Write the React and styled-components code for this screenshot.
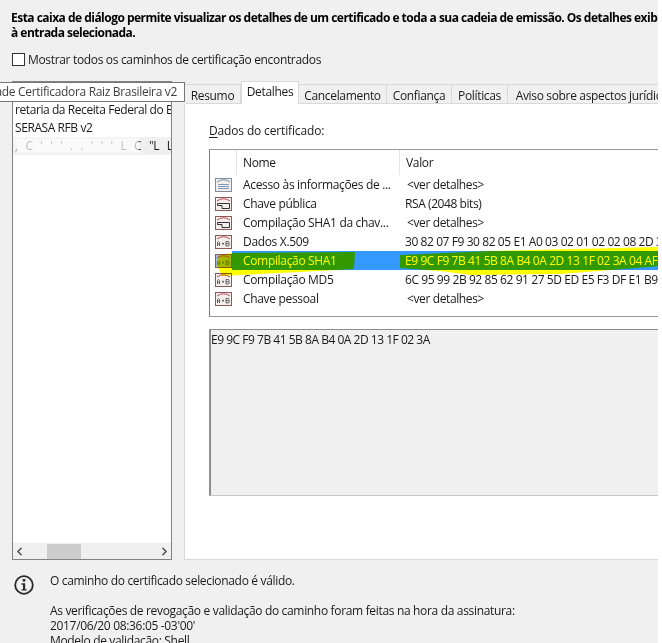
import React from "react";
import styled, { createGlobalStyle } from "styled-components";
import { ChevronLeft, ChevronRight } from "lucide-react";

const GlobalStyle = createGlobalStyle`
  html, body { margin: 0; padding: 0; background: #fff; }
  * { box-sizing: border-box; }
`;

const Page = styled.div`
  width: 662px;
  height: 643px;
  background: #fff;
  overflow: hidden;
`;

const Dialog = styled.div`
  position: relative;
  width: 658px;
  height: 643px;
  background: #f0f0f0;
  overflow: hidden;
  font-family: "Open Sans", "Noto Sans", sans-serif;
  font-size: 12px;
  line-height: 15px;
  letter-spacing: -0.33px;
  color: #1a1a1a;
`;

const Intro = styled.div`
  height: 44px;
  padding: 10px 0 0 11px;
  font-weight: 700;
  letter-spacing: -0.52px;
  color: #000;
  white-space: nowrap;
`;

const CheckRow = styled.label`
  display: flex;
  align-items: center;
  gap: 3px;
  height: 16px;
  margin: 7px 0 0 12px;
`;

const CheckBox = styled.span`
  width: 13px;
  height: 13px;
  background: #fff;
  border: 1px solid #333;
`;

const Main = styled.div`
  display: flex;
  gap: 12px;
  height: 479px;
  margin-top: 14px;
  padding-left: 12px;
`;

const TreePanel = styled.div`
  display: flex;
  flex-direction: column;
  width: 160px;
  background: #fff;
  border: 1px solid #828282;
`;

const TreeList = styled.div`
  flex: 1;
  padding-top: 1px;
  overflow: hidden;
  letter-spacing: -0.42px;
`;

const TreeRow = styled.div`
  position: relative;
  height: 18px;
  padding-left: 2px;
  line-height: 18px;
  white-space: nowrap;
  overflow: hidden;
  word-spacing: ${(p) => (p.$muted ? "5px" : "0")};
  background: ${(p) => (p.$muted ? "#f0f0f0" : "transparent")};
`;

const Blot = styled.span`
  position: absolute;
  left: 2px;
  top: 1px;
  width: 124px;
  height: 15px;
  background: #fff;
  opacity: 0.7;
  filter: blur(1px);
`;

const TreeScroll = styled.div`
  display: flex;
  align-items: center;
  justify-content: space-between;
  height: 16px;
  background: #f0f0f0;
  color: #555;
`;

const ScrollThumb = styled.span`
  width: 34px;
  height: 15px;
  margin-left: 21px;
  margin-right: auto;
  background: #cdcdcd;
`;

const PathTip = styled.div`
  position: absolute;
  left: -1px;
  top: 82px;
  display: flex;
  justify-content: flex-end;
  width: 186px;
  height: 20px;
  padding: 0 7px 0 0;
  line-height: 18px;
  white-space: nowrap;
  overflow: hidden;
  color: #3f3f3f;
  background: #fff;
  border: 1px solid #767676;
`;

const TabArea = styled.div`
  display: flex;
  flex-direction: column;
  flex: 1;
  min-width: 0;
`;

const TabStrip = styled.div`
  display: flex;
  align-items: flex-end;
  height: 23px;
  padding-left: 1px;
`;

const Tab = styled.div`
  flex: none;
  width: ${(p) => p.$w}px;
  height: ${(p) => (p.$active ? 23 : 20)}px;
  padding-top: ${(p) => (p.$active ? 2 : 3)}px;
  text-align: center;
  white-space: nowrap;
  overflow: hidden;
  background: ${(p) => (p.$active ? "#fff" : "#f0f0f0")};
  border: 1px solid #d9d9d9;
  border-left-width: ${(p) => (p.$active ? 1 : 0)}px;
  border-bottom-width: ${(p) => (p.$active ? 0 : 1)}px;
`;

const TabPanel = styled.div`
  flex: 1;
  padding: 19px 0 0 24px;
  background: #fff;
  border-left: 1px solid #d9d9d9;
  border-bottom: 1px solid #d9d9d9;
`;

const FieldLabel = styled.div`
  height: 15px;
  letter-spacing: -0.15px;

  u { text-decoration-thickness: 1px; text-underline-offset: 2px; }
`;

const FieldBox = styled.div`
  position: relative;
  height: 168px;
  margin-top: 11px;
  border: 1px solid #9a9a9a;
  border-right: 0;
  border-left-color: #7d7d7d;
`;

const FieldRow = styled.div`
  display: grid;
  grid-template-columns: 26px 163px 1fr;
  align-items: center;
  height: 19px;
  white-space: nowrap;
  background: ${(p) =>
    p.$selected ? "linear-gradient(90deg, transparent 22px, #3399ff 22px)" : "transparent"};
  color: ${(p) => (p.$selected ? "#fff" : "inherit")};
`;

const HeadRow = styled(FieldRow)`
  height: 25px;
`;

const HeadCell = styled.div`
  height: 25px;
  padding: 5px 0 0 6px;
  border-left: ${(p) => (p.$first ? "0" : "1px solid #e5e5e5")};
`;

const IconCell = styled.div`
  display: flex;
  padding-left: 5px;
`;

const NameCell = styled.div`
  padding-left: 7px;
  overflow: hidden;
`;

const ValueCell = styled.div`
  padding-left: ${(p) => (p.$plain ? 6 : 8)}px;
  letter-spacing: ${(p) => (p.$plain ? "-0.42px" : "-0.38px")};
`;

const Marker = styled.svg`
  position: absolute;
  left: 0;
  top: 0;
  mix-blend-mode: multiply;
  pointer-events: none;
`;

const DetailBox = styled.div`
  height: 167px;
  margin-top: 12px;
  padding: 2px 0 0;
  letter-spacing: -0.48px;
  background: #f0f0f0;
  border-top: 1px solid #8e8e8e;
  border-left: 2px solid #8e8e8e;
  border-bottom: 1px solid #c8c8c8;
`;

const Footer = styled.div`
  display: flex;
  gap: 16px;
  padding: 13px 0 0 14px;
`;

const StatusText = styled.div`
  white-space: nowrap;

  p { margin: 0 0 15px; }
`;

const CertIcon = ({ kind, tinted }) => (
  <svg width="17" height="14" viewBox="0 0 17 14">
    <rect
      x="0.5"
      y="0.5"
      width="16"
      height="13"
      fill={tinted ? "#a3b9d8" : "#f4eeee"}
      stroke={kind === "info" ? "#7c8ba0" : "#8a5a5a"}
    />
    <path d="M2 4 Q8.5 -0.5 15 4" fill="none" stroke={kind === "info" ? "#6f86a8" : "#c04a4a"} />
    {kind === "info" && <path d="M3 6.5H14M3 8.5H14M3 10.5H14" stroke="#7f9abb" />}
    {kind === "key" && <path d="M2.5 6.5H14.5V11.5H7V8.5H2.5Z" fill="none" stroke="#333" />}
    {kind === "hash" && (
      <path
        d="M2.5 11V7.5L3.5 6.5 4.5 7.5V11M2.5 9H4.5M7 8.7H9M8 7.7V9.7M11 6.5V11H13.5L14.2 10V8.9L13.5 8.7H11M13.5 8.7L14 8V7L13.5 6.5H11"
        fill="none"
        stroke={tinted ? "#5f6f60" : "#444"}
        strokeWidth="0.8"
      />
    )}
  </svg>
);

const InfoIcon = () => (
  <svg width="20" height="24" viewBox="0 0 20 24">
    <circle cx="10" cy="12" r="8.8" fill="none" stroke="#2b2b2b" strokeWidth="1.8" />
    <rect x="8.7" y="6" width="2.6" height="2.6" fill="#2b2b2b" />
    <path d="M7.5 10.3H11.2V16.2H12.7V17.6H7.5V16.2H9V11.7H7.5Z" fill="#2b2b2b" />
  </svg>
);

const fields = [
  { icon: "info", name: "Acesso às informações de ...", value: "<ver detalhes>" },
  { icon: "key", name: "Chave pública", value: "RSA (2048 bits)", plain: true },
  { icon: "key", name: "Compilação SHA1 da chav...", value: "<ver detalhes>" },
  { icon: "hash", name: "Dados X.509", value: "30 82 07 F9 30 82 05 E1 A0 03 02 01 02 02 08 2D 3I", plain: true },
  { icon: "hash", name: "Compilação SHA1", value: "E9 9C F9 7B 41 5B 8A B4 0A 2D 13 1F 02 3A 04 AF", plain: true, selected: true },
  { icon: "hash", name: "Compilação MD5", value: "6C 95 99 2B 92 85 62 91 27 5D ED E5 F3 DF E1 B9", plain: true },
  { icon: "hash", name: "Chave pessoal", value: "<ver detalhes>" },
];

const tabs = [
  { label: "Resumo", w: 56 },
  { label: "Detalhes", w: 58, active: true },
  { label: "Cancelamento", w: 88 },
  { label: "Confiança", w: 65 },
  { label: "Políticas", w: 56 },
  { label: "Aviso sobre aspectos jurídicos", w: 174 },
];

export default function App() {
  return (
    <Page>
      <GlobalStyle />
      <Dialog>
        <Intro>
          Esta caixa de diálogo permite visualizar os detalhes de um certificado e toda a sua cadeia de emissão. Os detalhes exibidos
          <br />
          à entrada selecionada.
        </Intro>
        <CheckRow>
          <CheckBox />
          Mostrar todos os caminhos de certificação encontrados
        </CheckRow>
        <Main>
          <TreePanel>
            <TreeList>
              <TreeRow>Autoridade Certificadora</TreeRow>
              <TreeRow>retaria da Receita Federal do Brasil</TreeRow>
              <TreeRow>SERASA RFB v2</TreeRow>
              <TreeRow $muted>
                <Blot />
                , C ' ' ' . . ' ' ' L C ''L LTDA
              </TreeRow>
            </TreeList>
            <TreeScroll>
              <ChevronLeft size={13} strokeWidth={3} />
              <ScrollThumb />
              <ChevronRight size={13} strokeWidth={3} />
            </TreeScroll>
          </TreePanel>
          <TabArea>
            <TabStrip>
              {tabs.map((t) => (
                <Tab key={t.label} $w={t.w} $active={t.active}>
                  {t.label}
                </Tab>
              ))}
            </TabStrip>
            <TabPanel>
              <FieldLabel>
                <u>D</u>ados do certificado:
              </FieldLabel>
              <FieldBox>
                <HeadRow>
                  <HeadCell $first />
                  <HeadCell>Nome</HeadCell>
                  <HeadCell>Valor</HeadCell>
                </HeadRow>
                {fields.map((f) => (
                  <FieldRow key={f.name} $selected={f.selected}>
                    <IconCell>
                      <CertIcon kind={f.icon} tinted={f.selected} />
                    </IconCell>
                    <NameCell>{f.name}</NameCell>
                    <ValueCell $plain={f.plain}>{f.value}</ValueCell>
                  </FieldRow>
                ))}
                <Marker width="448" height="166" viewBox="210 150 448 166">
                  <path d="M219 255 L232 253 L355 252 L354 269 L300 272 L240 275 L222 276 L217 265Z" fill="#ffff00" />
                  <path d="M400 255 L490 251 L660 247 L660 266 L560 274 L470 275 L440 271 L400 268Z" fill="#ffff00" />
                </Marker>
              </FieldBox>
              <DetailBox>E9 9C F9 7B 41 5B 8A B4 0A 2D 13 1F 02 3A</DetailBox>
            </TabPanel>
          </TabArea>
        </Main>
        <PathTip>Autoridade Certificadora Raiz Brasileira v2</PathTip>
        <Footer>
          <InfoIcon />
          <StatusText>
            <p>O caminho do certificado selecionado é válido.</p>
            As verificações de revogação e validação do caminho foram feitas na hora da assinatura:
            <br />
            2017/06/20 08:36:05 -03'00'
            <br />
            Modelo de validação: Shell
          </StatusText>
        </Footer>
      </Dialog>
    </Page>
  );
}
